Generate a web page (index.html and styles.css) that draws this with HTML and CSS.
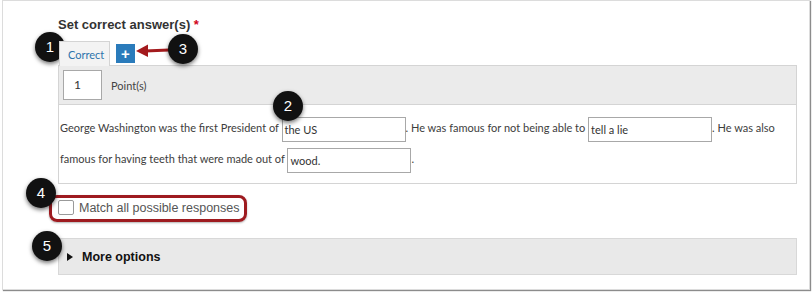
FILE: index.html
```html
<!DOCTYPE html>
<html>
<head>
<meta charset="utf-8">
<link rel="stylesheet" href="styles.css">
</head>
<body>
<div class="card">
  <div class="title">Set correct answer(s) <span class="req">*</span></div>
  <div class="tabs">
    <div class="tab">Correct</div>
    <div class="add">+</div>
  </div>
  <div class="panel">
    <div class="points">
      <div class="pts-input">1</div>
      <span class="pts-label">Point(s)</span>
    </div>
    <div class="sentence">George Washington was the first President of <span class="blank">the US</span>. He was famous for not being able to <span class="blank">tell a lie</span>. He was also famous for having teeth that were made out of <span class="blank">wood.</span>.</div>
  </div>
  <div class="match">
    <span class="checkbox"></span>
    <span class="match-label">Match all possible responses</span>
  </div>
  <div class="more">
    <span class="tri"></span>
    <span class="more-label">More options</span>
  </div>
</div>

<div class="highlight"></div>
<svg class="arrow" width="34" height="16" viewBox="0 0 34 16">
  <line x1="9" y1="8" x2="33" y2="7" stroke="#a31a1d" stroke-width="3"/>
  <polygon points="0,8 12,1.5 12,14" fill="#a31a1d"/>
</svg>
<div class="badge b1">1</div>
<div class="badge b2">2</div>
<div class="badge b3">3</div>
<div class="badge b4">4</div>
<div class="badge b5">5</div>
</body>
</html>
```
FILE: styles.css
```css
html, body {
  margin: 0;
  padding: 0;
  background: #ffffff;
}
body {
  position: relative;
  width: 812px;
  height: 293px;
  overflow: hidden;
  font-family: "Liberation Sans", Arial, sans-serif;
}
.card {
  margin-left: 2px;
  width: 808px;
  height: 290px;
  box-sizing: border-box;
  border: 1px solid #dcdcdc;
  box-shadow: 1px 1px 1px #8c8c8c;
  padding: 16px 12px 0 55px;
}
.title {
  font-weight: bold;
  font-size: 13px;
  line-height: 16px;
  color: #333;
}
.req {
  color: #d0021b;
}
.tabs {
  display: flex;
  align-items: flex-start;
  margin-top: 8px;
  height: 24px;
}
.tab {
  box-sizing: border-box;
  width: 51px;
  height: 25px;
  margin-left: 1px;
  border: 1px solid #d4d4d4;
  border-bottom: none;
  background: #f3f3f3;
  color: #2d73ac;
  font-family: Lato, sans-serif;
  font-size: 11px;
  line-height: 26px;
  padding-left: 8px;
  position: relative;
  z-index: 1;
}
.add {
  width: 19px;
  height: 19px;
  margin: 3px 0 0 6px;
  background: #2a7bbb;
  color: #fff;
  font-weight: bold;
  font-size: 15px;
  line-height: 19px;
  text-align: center;
}
.panel {
  border: 1px solid #d4d4d4;
}
.points {
  display: flex;
  align-items: center;
  height: 38px;
  background: #ebebeb;
  border-bottom: 1px solid #d4d4d4;
  padding-left: 4px;
}
.pts-input {
  box-sizing: border-box;
  width: 39px;
  height: 30px;
  background: #fff;
  border: 1px solid #a8a8a8;
  font-family: Lato, sans-serif;
  font-size: 12px;
  line-height: 28px;
  padding-left: 10px;
  color: #333;
}
.pts-label {
  margin-left: 9px;
  font-family: Lato, sans-serif;
  font-size: 11px;
  color: #444;
}
.sentence {
  padding: 7px 0 9px 1px;
  font-family: Lato, sans-serif;
  font-size: 11px;
  line-height: 31px;
  color: #3d3d3d;
}
.blank {
  display: inline-block;
  box-sizing: border-box;
  width: 124px;
  height: 25px;
  border: 1px solid #a8a8a8;
  line-height: 23px;
  padding-left: 2px;
  vertical-align: middle;
  color: #333;
}
.match {
  display: flex;
  align-items: center;
  margin-top: 16px;
  height: 15px;
}
.checkbox {
  box-sizing: border-box;
  width: 16px;
  height: 15px;
  border: 1px solid #9a9a9a;
  border-radius: 2px;
  background: #fff;
}
.match-label {
  margin-left: 5px;
  font-size: 12.5px;
  color: #555;
}
.more {
  display: flex;
  align-items: center;
  margin-top: 23px;
  height: 35px;
  background: #e9e9e9;
  border: 1px solid #d8d8d8;
  padding-left: 8px;
}
.tri {
  width: 0;
  height: 0;
  border-top: 4px solid transparent;
  border-bottom: 4px solid transparent;
  border-left: 6px solid #111;
}
.more-label {
  margin-left: 9px;
  font-weight: bold;
  font-size: 12.5px;
  color: #111;
}
.highlight {
  position: absolute;
  left: 49px;
  top: 195px;
  width: 192px;
  height: 21px;
  border: 3px solid #9e1b20;
  border-radius: 8px;
  box-shadow: 0 1px 2px rgba(0,0,0,0.3);
}
.arrow {
  position: absolute;
  left: 136px;
  top: 43px;
}
.badge {
  position: absolute;
  width: 30px;
  height: 30px;
  border-radius: 50%;
  background: #111;
  color: #fff;
  font-size: 15px;
  line-height: 30px;
  text-align: center;
  box-shadow: 0 2px 4px rgba(0,0,0,0.55);
}
.b1 { left: 35px; top: 32px; }
.b2 { left: 273px; top: 91px; }
.b3 { left: 168px; top: 34px; }
.b4 { left: 26px; top: 178px; }
.b5 { left: 32px; top: 231px; }
```
